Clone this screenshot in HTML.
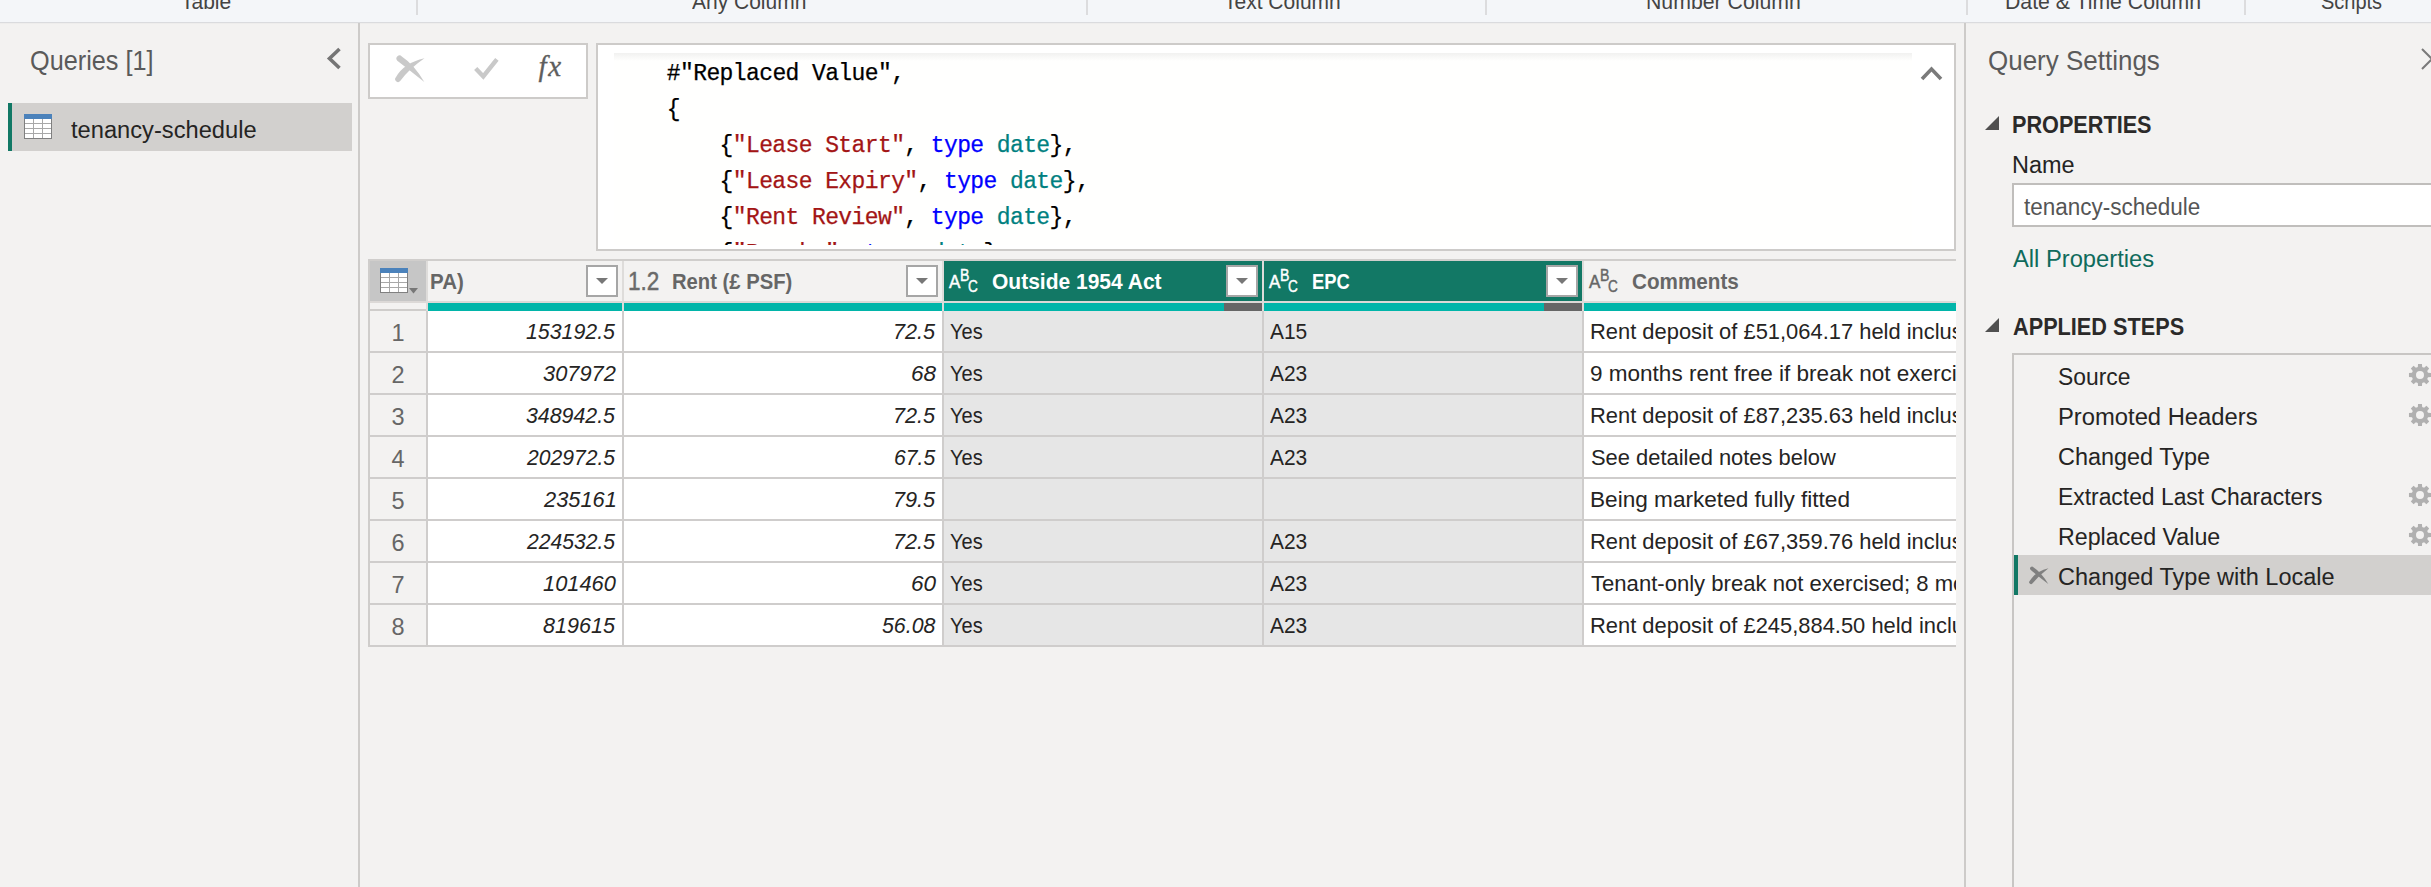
<!DOCTYPE html>
<html lang="en"><head><meta charset="utf-8"><title>Power Query Editor</title>
<style>
*{box-sizing:border-box}
html,body{margin:0;padding:0}
html{width:2431px;height:887px;overflow:hidden}
body{width:2431px;height:887px;overflow:hidden;background:#f3f2f1;position:relative;font-family:"Liberation Sans",sans-serif}
.t{position:absolute;white-space:pre;line-height:1;transform-origin:0 0}
.abs{position:absolute}
svg{position:absolute;overflow:visible}
#ribbon{left:0;top:0;width:2431px;height:22px;background:#f4f6f9;overflow:hidden}
#ribline{left:0;top:22px;width:2431px;height:2px;background:linear-gradient(#dadbde 50%,#eeedec 50%)}
.rsep{top:0;width:2px;height:15px;background:#dcdcde}
#lborder{left:358px;top:23px;width:2px;height:864px;background:#cdcbc9}
#rborder{left:1964px;top:23px;width:2px;height:864px;background:#cdcbc9}
#qitem{left:8px;top:103px;width:344px;height:48px;background:#d2d0ce}
#qitem i{position:absolute;left:0;top:0;width:4px;height:48px;background:#117865}
#fxbox{left:368px;top:43px;width:220px;height:56px;background:#fff;border:2px solid #cdcbc9}
#fbox{left:596px;top:43px;width:1360px;height:208px;background:#fff;border:2px solid #cdcbc9;overflow:hidden}
#code{left:16px;top:8px;width:1298px;height:192px;background:linear-gradient(#f1f1f0,#fffffe 8px);overflow:hidden}
.cl{position:absolute;left:0;-webkit-text-stroke:0.25px currentColor;white-space:pre;line-height:1;font-family:"Liberation Mono",monospace;color:#000;transform-origin:0 0}
.s{color:#a31515}.k{color:#0000ff}.ty{color:#008080}.q{color:#000}
#gridclip{left:0;top:0;width:1956px;height:887px;overflow:hidden}
.dd{width:32px;height:32px;background:#fff;border:2px solid #a6a6a6}
.dd i{position:absolute;left:8px;top:11px;width:0;height:0;border-left:6px solid transparent;border-right:6px solid transparent;border-top:6px solid #777}
#nameinput{left:2012px;top:183px;width:419px;height:44px;background:#fff;border:2px solid #c0bebc;border-right:0}
#stepsbox{left:2012px;top:353px;width:419px;height:534px;border:2px solid #c8c6c4;border-right:0;border-bottom:0;overflow:hidden}
#selstep{left:0;top:200px;width:417px;height:40px;background:#d2d0ce}
#selstep i{position:absolute;left:0;top:0;width:4px;height:40px;background:#117865}
.abc{-webkit-text-stroke:0.45px currentColor}
#app{left:0;top:0;width:2431px;height:887px;overflow:hidden}
</style></head>
<body>
<div id="app" class="abs">
<div id="ribbon" class="abs"><span class="t" style="top:-10.52px;font:400 22px 'Liberation Sans',sans-serif;color:#444;left:181.20px;transform:scaleX(0.9550)">Table</span>
<span class="t" style="top:-10.52px;font:400 22px 'Liberation Sans',sans-serif;color:#444;left:691.50px;transform:scaleX(0.9545)">Any Column</span>
<span class="t" style="top:-10.52px;font:400 22px 'Liberation Sans',sans-serif;color:#444;left:1224.01px;transform:scaleX(0.9550)">Text Column</span>
<span class="t" style="top:-10.52px;font:400 22px 'Liberation Sans',sans-serif;color:#444;left:1645.83px;transform:scaleX(0.9669)">Number Column</span>
<span class="t" style="top:-10.52px;font:400 22px 'Liberation Sans',sans-serif;color:#444;left:2005.03px;transform:scaleX(0.9661)">Date &amp; Time Column</span>
<span class="t" style="top:-10.52px;font:400 22px 'Liberation Sans',sans-serif;color:#444;left:2321.09px;transform:scaleX(0.9089)">Scripts</span></div>
<div class="abs rsep" style="left:416px"></div>
<div class="abs rsep" style="left:1085.5px"></div>
<div class="abs rsep" style="left:1484.5px"></div>
<div class="abs rsep" style="left:1966px"></div>
<div class="abs rsep" style="left:2244px"></div>
<div id="ribline" class="abs"></div>
<div id="lborder" class="abs"></div><div id="rborder" class="abs"></div>
<div id="qitem" class="abs"><i></i></div>
<svg style="left:326px;top:47px" width="16" height="23" viewBox="0 0 16 23"><path d="M13.5 2 L3.5 11.5 L13.5 21" fill="none" stroke="#757575" stroke-width="3.6"/></svg>
<svg style="left:24px;top:114px" width="28" height="25" viewBox="0 0 28 25"><rect x="0.5" y="0.5" width="27" height="24" fill="#fff" stroke="#808080"/><rect x="0" y="0" width="28" height="5" fill="#4b82bb"/><path d="M1 9.5H27M1 14.5H27M1 19.5H27M9.5 5V24M18.5 5V24" stroke="#a8a8a8" stroke-width="1" fill="none"/></svg>

<div id="fxbox" class="abs"><svg style="left:25px;top:10px" width="31" height="29" viewBox="0 0 31 29"><path d="M29.3 27 Q19 9.5 6.8 1.5 A2.8 2.8 0 0 0 2.3 5.7 Q12.5 13.5 29.3 27 Z M29.5 3.3 Q9 8 0.9 22.2 A2.8 2.8 0 0 0 5.2 26 Q14.5 13.5 29.5 3.3 Z" fill="#c9c9c9"/></svg>
<svg style="left:104px;top:13px" width="26" height="23" viewBox="0 0 26 23"><path d="M1.7 10.4 L9.3 18.4 L22.9 1.4" fill="none" stroke="#c9c9c9" stroke-width="4.4"/></svg>
<span class="t" style="left:168.5px;top:4.6px;font:italic 400 29px 'Liberation Serif',serif;color:#5e5e5e;letter-spacing:1.6px;-webkit-text-stroke:0.3px #5e5e5e">fx</span>
</div>
<div id="fbox" class="abs"><div id="code" class="abs"><div class="cl" style="top:9.67px;font-size:23.0px;letter-spacing:-0.605px">    #<span class="q">"Replaced Value"</span>,</div><div class="cl" style="top:45.67px;font-size:23.0px;letter-spacing:-0.605px">    {</div><div class="cl" style="top:81.67px;font-size:23.0px;letter-spacing:-0.605px">        {<span class="s">"Lease Start"</span>, <span class="k">type</span> <span class="ty">date</span>},</div><div class="cl" style="top:117.67px;font-size:23.0px;letter-spacing:-0.605px">        {<span class="s">"Lease Expiry"</span>, <span class="k">type</span> <span class="ty">date</span>},</div><div class="cl" style="top:153.67px;font-size:23.0px;letter-spacing:-0.605px">        {<span class="s">"Rent Review"</span>, <span class="k">type</span> <span class="ty">date</span>},</div><div class="cl" style="top:189.67px;font-size:23.0px;letter-spacing:-0.605px">        {<span class="s">"Breaks"</span>, <span class="k">type</span> <span class="ty">date</span>},</div></div><svg style="left:1322px;top:19.5px" width="23" height="16" viewBox="0 0 23 16"><path d="M2 14 L11.5 4 L21 14" fill="none" stroke="#7a7a7a" stroke-width="3.6"/></svg>
</div>
<div id="gridclip" class="abs"><div class="abs" style="left:368px;top:259px;width:1588px;height:2px;background:#d0cecc;"></div>
<div class="abs" style="left:368px;top:259px;width:2px;height:388px;background:#cfcdcb;"></div>
<div class="abs" style="left:370px;top:261px;width:56px;height:40px;background:#c6c6c6;"></div>
<div class="abs" style="left:944px;top:261px;width:318px;height:40px;background:#127865;"></div>
<div class="abs" style="left:1264px;top:261px;width:318px;height:40px;background:#127865;"></div>
<div class="abs" style="left:370px;top:301px;width:1586px;height:2px;background:#dcd9d7;"></div>
<div class="abs" style="left:370px;top:309px;width:56px;height:2px;background:#cfcdcb;"></div>
<div class="abs" style="left:428px;top:303px;width:194px;height:8px;background:#01b5a9;"></div>
<div class="abs" style="left:624px;top:303px;width:318px;height:8px;background:#01b5a9;"></div>
<div class="abs" style="left:944px;top:303px;width:280px;height:8px;background:#01b5a9;"></div>
<div class="abs" style="left:1264px;top:303px;width:280px;height:8px;background:#01b5a9;"></div>
<div class="abs" style="left:1584px;top:303px;width:372px;height:8px;background:#01b5a9;"></div>
<div class="abs" style="left:1224px;top:303px;width:38px;height:8px;background:#666;"></div>
<div class="abs" style="left:1544px;top:303px;width:38px;height:8px;background:#666;"></div>
<div class="abs" style="left:428px;top:311px;width:194px;height:40px;background:#fff;"></div>
<div class="abs" style="left:624px;top:311px;width:318px;height:40px;background:#fff;"></div>
<div class="abs" style="left:1584px;top:311px;width:372px;height:40px;background:#fff;"></div>
<div class="abs" style="left:944px;top:311px;width:318px;height:40px;background:#e6e6e6;"></div>
<div class="abs" style="left:1264px;top:311px;width:318px;height:40px;background:#e6e6e6;"></div>
<div class="abs" style="left:370px;top:351px;width:1586px;height:2px;background:#cfcdcc;"></div>
<div class="abs" style="left:428px;top:353px;width:194px;height:40px;background:#fff;"></div>
<div class="abs" style="left:624px;top:353px;width:318px;height:40px;background:#fff;"></div>
<div class="abs" style="left:1584px;top:353px;width:372px;height:40px;background:#fff;"></div>
<div class="abs" style="left:944px;top:353px;width:318px;height:40px;background:#e6e6e6;"></div>
<div class="abs" style="left:1264px;top:353px;width:318px;height:40px;background:#e6e6e6;"></div>
<div class="abs" style="left:370px;top:393px;width:1586px;height:2px;background:#cfcdcc;"></div>
<div class="abs" style="left:428px;top:395px;width:194px;height:40px;background:#fff;"></div>
<div class="abs" style="left:624px;top:395px;width:318px;height:40px;background:#fff;"></div>
<div class="abs" style="left:1584px;top:395px;width:372px;height:40px;background:#fff;"></div>
<div class="abs" style="left:944px;top:395px;width:318px;height:40px;background:#e6e6e6;"></div>
<div class="abs" style="left:1264px;top:395px;width:318px;height:40px;background:#e6e6e6;"></div>
<div class="abs" style="left:370px;top:435px;width:1586px;height:2px;background:#cfcdcc;"></div>
<div class="abs" style="left:428px;top:437px;width:194px;height:40px;background:#fff;"></div>
<div class="abs" style="left:624px;top:437px;width:318px;height:40px;background:#fff;"></div>
<div class="abs" style="left:1584px;top:437px;width:372px;height:40px;background:#fff;"></div>
<div class="abs" style="left:944px;top:437px;width:318px;height:40px;background:#e6e6e6;"></div>
<div class="abs" style="left:1264px;top:437px;width:318px;height:40px;background:#e6e6e6;"></div>
<div class="abs" style="left:370px;top:477px;width:1586px;height:2px;background:#cfcdcc;"></div>
<div class="abs" style="left:428px;top:479px;width:194px;height:40px;background:#fff;"></div>
<div class="abs" style="left:624px;top:479px;width:318px;height:40px;background:#fff;"></div>
<div class="abs" style="left:1584px;top:479px;width:372px;height:40px;background:#fff;"></div>
<div class="abs" style="left:944px;top:479px;width:318px;height:40px;background:#e6e6e6;"></div>
<div class="abs" style="left:1264px;top:479px;width:318px;height:40px;background:#e6e6e6;"></div>
<div class="abs" style="left:370px;top:519px;width:1586px;height:2px;background:#cfcdcc;"></div>
<div class="abs" style="left:428px;top:521px;width:194px;height:40px;background:#fff;"></div>
<div class="abs" style="left:624px;top:521px;width:318px;height:40px;background:#fff;"></div>
<div class="abs" style="left:1584px;top:521px;width:372px;height:40px;background:#fff;"></div>
<div class="abs" style="left:944px;top:521px;width:318px;height:40px;background:#e6e6e6;"></div>
<div class="abs" style="left:1264px;top:521px;width:318px;height:40px;background:#e6e6e6;"></div>
<div class="abs" style="left:370px;top:561px;width:1586px;height:2px;background:#cfcdcc;"></div>
<div class="abs" style="left:428px;top:563px;width:194px;height:40px;background:#fff;"></div>
<div class="abs" style="left:624px;top:563px;width:318px;height:40px;background:#fff;"></div>
<div class="abs" style="left:1584px;top:563px;width:372px;height:40px;background:#fff;"></div>
<div class="abs" style="left:944px;top:563px;width:318px;height:40px;background:#e6e6e6;"></div>
<div class="abs" style="left:1264px;top:563px;width:318px;height:40px;background:#e6e6e6;"></div>
<div class="abs" style="left:370px;top:603px;width:1586px;height:2px;background:#cfcdcc;"></div>
<div class="abs" style="left:428px;top:605px;width:194px;height:40px;background:#fff;"></div>
<div class="abs" style="left:624px;top:605px;width:318px;height:40px;background:#fff;"></div>
<div class="abs" style="left:1584px;top:605px;width:372px;height:40px;background:#fff;"></div>
<div class="abs" style="left:944px;top:605px;width:318px;height:40px;background:#e6e6e6;"></div>
<div class="abs" style="left:1264px;top:605px;width:318px;height:40px;background:#e6e6e6;"></div>
<div class="abs" style="left:370px;top:645px;width:1586px;height:2px;background:#cfcdcc;"></div>
<div class="abs" style="left:426px;top:261px;width:2px;height:50px;background:#dedcda;"></div>
<div class="abs" style="left:426px;top:311px;width:2px;height:336px;background:#cfcdcc;"></div>
<div class="abs" style="left:622px;top:261px;width:2px;height:50px;background:#dedcda;"></div>
<div class="abs" style="left:622px;top:311px;width:2px;height:336px;background:#cfcdcc;"></div>
<div class="abs" style="left:942px;top:261px;width:2px;height:50px;background:#dedcda;"></div>
<div class="abs" style="left:942px;top:311px;width:2px;height:336px;background:#cfcdcc;"></div>
<div class="abs" style="left:1262px;top:261px;width:2px;height:50px;background:#dedcda;"></div>
<div class="abs" style="left:1262px;top:311px;width:2px;height:336px;background:#cfcdcc;"></div>
<div class="abs" style="left:1582px;top:261px;width:2px;height:50px;background:#dedcda;"></div>
<div class="abs" style="left:1582px;top:311px;width:2px;height:336px;background:#cfcdcc;"></div>
<div class="abs dd" style="left:586px;top:265px"><i></i></div>
<div class="abs dd" style="left:906px;top:265px"><i></i></div>
<div class="abs dd" style="left:1226px;top:265px"><i></i></div>
<div class="abs dd" style="left:1546px;top:265px"><i></i></div>
<svg style="left:380px;top:268px" width="40" height="26" viewBox="0 0 40 26"><rect x="0.5" y="0.5" width="27" height="24" fill="#fff" stroke="#808080"/><rect x="0" y="0" width="28" height="5" fill="#4b82bb"/><path d="M1 9.5H27M1 14.5H27M1 19.5H27M9.5 5V24M18.5 5V24" stroke="#a8a8a8" stroke-width="1" fill="none"/><path d="M29 20 H38 L33.5 25.5 Z" fill="#777"/></svg>

<span class="t" style="top:269.48px;font:700 22px 'Liberation Sans',sans-serif;color:#666;left:429.77px;transform:scaleX(0.9305)">PA)</span>
<span class="t abc" style="top:266.27px;font:400 26.5px 'Liberation Sans',sans-serif;color:#6a6a6a;left:627.60px;transform:scaleX(0.8504)">1.2</span>
<span class="t" style="top:269.48px;font:700 22px 'Liberation Sans',sans-serif;color:#666;left:671.78px;transform:scaleX(0.9192)">Rent (£ PSF)</span>
<span class="t" style="top:269.48px;font:700 22px 'Liberation Sans',sans-serif;color:#fff;left:992.30px;transform:scaleX(0.9543)">Outside 1954 Act</span>
<span class="t" style="top:269.48px;font:700 22px 'Liberation Sans',sans-serif;color:#fff;left:1311.77px;transform:scaleX(0.8343)">EPC</span>
<span class="t" style="top:269.48px;font:700 22px 'Liberation Sans',sans-serif;color:#666;left:1632.40px;transform:scaleX(0.9396)">Comments</span>
<span class="t abc" style="top:272.19px;font:400 17.5px 'Liberation Sans',sans-serif;color:#fff;left:949.30px;transform:scaleX(0.9750)">A</span>
<span class="t abc" style="top:265.61px;font:400 17px 'Liberation Sans',sans-serif;color:#fff;left:960.17px;transform:scaleX(0.8300)">B</span>
<span class="t abc" style="top:276.88px;font:400 16.8px 'Liberation Sans',sans-serif;color:#fff;left:968.40px;transform:scaleX(0.8083)">C</span>
<span class="t abc" style="top:272.19px;font:400 17.5px 'Liberation Sans',sans-serif;color:#fff;left:1269.20px;transform:scaleX(0.9750)">A</span>
<span class="t abc" style="top:265.61px;font:400 17px 'Liberation Sans',sans-serif;color:#fff;left:1280.07px;transform:scaleX(0.8300)">B</span>
<span class="t abc" style="top:276.88px;font:400 16.8px 'Liberation Sans',sans-serif;color:#fff;left:1288.30px;transform:scaleX(0.8083)">C</span>
<span class="t abc" style="top:272.19px;font:400 17.5px 'Liberation Sans',sans-serif;color:#666;left:1589.30px;transform:scaleX(0.9750)">A</span>
<span class="t abc" style="top:265.61px;font:400 17px 'Liberation Sans',sans-serif;color:#666;left:1600.17px;transform:scaleX(0.8300)">B</span>
<span class="t abc" style="top:276.88px;font:400 16.8px 'Liberation Sans',sans-serif;color:#666;left:1608.40px;transform:scaleX(0.8083)">C</span>
<span class="t" style="top:319.51px;font:400 23.5px 'Liberation Sans',sans-serif;color:#666;left:391.47px;transform:scaleX(1.0000)">1</span>
<span class="t" style="top:319.90px;font:italic 400 21.5px 'Liberation Sans',sans-serif;color:#252423;left:525.70px;transform:scaleX(0.9921)">153192.5</span>
<span class="t" style="top:319.90px;font:italic 400 21.5px 'Liberation Sans',sans-serif;color:#252423;left:892.58px;transform:scaleX(1.0076)">72.5</span>
<span class="t" style="top:319.90px;font:400 21.5px 'Liberation Sans',sans-serif;color:#252423;left:950.00px;transform:scaleX(0.9323)">Yes</span>
<span class="t" style="top:319.90px;font:400 21.5px 'Liberation Sans',sans-serif;color:#252423;left:1270.00px;transform:scaleX(0.9740)">A15</span>
<span class="t" style="top:319.90px;font:400 21.5px 'Liberation Sans',sans-serif;color:#252423;left:1589.98px;transform:scaleX(1.0190)">Rent deposit of £51,064.17 held inclusive of VAT</span>
<span class="t" style="top:361.51px;font:400 23.5px 'Liberation Sans',sans-serif;color:#666;left:391.47px;transform:scaleX(1.0000)">2</span>
<span class="t" style="top:361.90px;font:italic 400 21.5px 'Liberation Sans',sans-serif;color:#252423;left:542.80px;transform:scaleX(1.0155)">307972</span>
<span class="t" style="top:361.90px;font:italic 400 21.5px 'Liberation Sans',sans-serif;color:#252423;left:910.65px;transform:scaleX(1.0498)">68</span>
<span class="t" style="top:361.90px;font:400 21.5px 'Liberation Sans',sans-serif;color:#252423;left:950.00px;transform:scaleX(0.9323)">Yes</span>
<span class="t" style="top:361.90px;font:400 21.5px 'Liberation Sans',sans-serif;color:#252423;left:1270.00px;transform:scaleX(0.9740)">A23</span>
<span class="t" style="top:361.90px;font:400 21.5px 'Liberation Sans',sans-serif;color:#252423;left:1589.95px;transform:scaleX(1.0477)">9 months rent free if break not exercised</span>
<span class="t" style="top:403.51px;font:400 23.5px 'Liberation Sans',sans-serif;color:#666;left:391.47px;transform:scaleX(1.0000)">3</span>
<span class="t" style="top:403.90px;font:italic 400 21.5px 'Liberation Sans',sans-serif;color:#252423;left:525.70px;transform:scaleX(0.9921)">348942.5</span>
<span class="t" style="top:403.90px;font:italic 400 21.5px 'Liberation Sans',sans-serif;color:#252423;left:892.58px;transform:scaleX(1.0076)">72.5</span>
<span class="t" style="top:403.90px;font:400 21.5px 'Liberation Sans',sans-serif;color:#252423;left:950.00px;transform:scaleX(0.9323)">Yes</span>
<span class="t" style="top:403.90px;font:400 21.5px 'Liberation Sans',sans-serif;color:#252423;left:1270.00px;transform:scaleX(0.9740)">A23</span>
<span class="t" style="top:403.90px;font:400 21.5px 'Liberation Sans',sans-serif;color:#252423;left:1589.98px;transform:scaleX(1.0190)">Rent deposit of £87,235.63 held inclusive of VAT</span>
<span class="t" style="top:445.51px;font:400 23.5px 'Liberation Sans',sans-serif;color:#666;left:391.47px;transform:scaleX(1.0000)">4</span>
<span class="t" style="top:445.90px;font:italic 400 21.5px 'Liberation Sans',sans-serif;color:#252423;left:526.68px;transform:scaleX(0.9813)">202972.5</span>
<span class="t" style="top:445.90px;font:italic 400 21.5px 'Liberation Sans',sans-serif;color:#252423;left:893.62px;transform:scaleX(0.9836)">67.5</span>
<span class="t" style="top:445.90px;font:400 21.5px 'Liberation Sans',sans-serif;color:#252423;left:950.00px;transform:scaleX(0.9323)">Yes</span>
<span class="t" style="top:445.90px;font:400 21.5px 'Liberation Sans',sans-serif;color:#252423;left:1270.00px;transform:scaleX(0.9740)">A23</span>
<span class="t" style="top:445.90px;font:400 21.5px 'Liberation Sans',sans-serif;color:#252423;left:1591.00px;transform:scaleX(1.0190)">See detailed notes below</span>
<span class="t" style="top:487.51px;font:400 23.5px 'Liberation Sans',sans-serif;color:#666;left:391.47px;transform:scaleX(1.0000)">5</span>
<span class="t" style="top:487.90px;font:italic 400 21.5px 'Liberation Sans',sans-serif;color:#252423;left:543.82px;transform:scaleX(1.0155)">235161</span>
<span class="t" style="top:487.90px;font:italic 400 21.5px 'Liberation Sans',sans-serif;color:#252423;left:892.58px;transform:scaleX(1.0076)">79.5</span>
<span class="t" style="top:487.90px;font:400 21.5px 'Liberation Sans',sans-serif;color:#252423;left:1589.95px;transform:scaleX(1.0510)">Being marketed fully fitted</span>
<span class="t" style="top:529.51px;font:400 23.5px 'Liberation Sans',sans-serif;color:#666;left:391.47px;transform:scaleX(1.0000)">6</span>
<span class="t" style="top:529.90px;font:italic 400 21.5px 'Liberation Sans',sans-serif;color:#252423;left:526.68px;transform:scaleX(0.9813)">224532.5</span>
<span class="t" style="top:529.90px;font:italic 400 21.5px 'Liberation Sans',sans-serif;color:#252423;left:892.58px;transform:scaleX(1.0076)">72.5</span>
<span class="t" style="top:529.90px;font:400 21.5px 'Liberation Sans',sans-serif;color:#252423;left:950.00px;transform:scaleX(0.9323)">Yes</span>
<span class="t" style="top:529.90px;font:400 21.5px 'Liberation Sans',sans-serif;color:#252423;left:1270.00px;transform:scaleX(0.9740)">A23</span>
<span class="t" style="top:529.90px;font:400 21.5px 'Liberation Sans',sans-serif;color:#252423;left:1589.98px;transform:scaleX(1.0190)">Rent deposit of £67,359.76 held inclusive of VAT</span>
<span class="t" style="top:571.51px;font:400 23.5px 'Liberation Sans',sans-serif;color:#666;left:391.47px;transform:scaleX(1.0000)">7</span>
<span class="t" style="top:571.90px;font:italic 400 21.5px 'Liberation Sans',sans-serif;color:#252423;left:542.80px;transform:scaleX(1.0155)">101460</span>
<span class="t" style="top:571.90px;font:italic 400 21.5px 'Liberation Sans',sans-serif;color:#252423;left:910.65px;transform:scaleX(1.0498)">60</span>
<span class="t" style="top:571.90px;font:400 21.5px 'Liberation Sans',sans-serif;color:#252423;left:950.00px;transform:scaleX(0.9323)">Yes</span>
<span class="t" style="top:571.90px;font:400 21.5px 'Liberation Sans',sans-serif;color:#252423;left:1270.00px;transform:scaleX(0.9740)">A23</span>
<span class="t" style="top:571.90px;font:400 21.5px 'Liberation Sans',sans-serif;color:#252423;left:1591.00px;transform:scaleX(1.0270)">Tenant-only break not exercised; 8 months rent free</span>
<span class="t" style="top:613.51px;font:400 23.5px 'Liberation Sans',sans-serif;color:#666;left:391.47px;transform:scaleX(1.0000)">8</span>
<span class="t" style="top:613.90px;font:italic 400 21.5px 'Liberation Sans',sans-serif;color:#252423;left:542.80px;transform:scaleX(1.0016)">819615</span>
<span class="t" style="top:613.90px;font:italic 400 21.5px 'Liberation Sans',sans-serif;color:#252423;left:882.40px;transform:scaleX(0.9917)">56.08</span>
<span class="t" style="top:613.90px;font:400 21.5px 'Liberation Sans',sans-serif;color:#252423;left:950.00px;transform:scaleX(0.9323)">Yes</span>
<span class="t" style="top:613.90px;font:400 21.5px 'Liberation Sans',sans-serif;color:#252423;left:1270.00px;transform:scaleX(0.9740)">A23</span>
<span class="t" style="top:613.90px;font:400 21.5px 'Liberation Sans',sans-serif;color:#252423;left:1589.98px;transform:scaleX(1.0190)">Rent deposit of £245,884.50 held inclusive of VAT</span></div>
<div id="nameinput" class="abs"></div><div id="stepsbox" class="abs"><div id="selstep" class="abs"><i></i></div></div>
<svg style="left:1985px;top:116px" width="14" height="14" viewBox="0 0 14 14"><path d="M14 0 V14 H0 Z" fill="#505050"/></svg>
<svg style="left:1985px;top:318px" width="14" height="14" viewBox="0 0 14 14"><path d="M14 0 V14 H0 Z" fill="#505050"/></svg>
<svg style="left:2029px;top:566px" width="20" height="19" viewBox="0 0 20 19"><path d="M19.3 18 Q12.5 6.5 4.4 1.2 A1.8 1.8 0 0 0 1.6 3.8 Q8.5 10 19.3 18 Z M19.5 2.3 Q6.5 5.5 0.6 15 A1.8 1.8 0 0 0 3.4 17.4 Q10 9.5 19.5 2.3 Z" fill="#808080"/></svg>
<svg style="left:2421px;top:48px" width="22" height="22" viewBox="0 0 22 22"><path d="M1 1 L21 21 M21 1 L1 21" fill="none" stroke="#7a7a7a" stroke-width="2"/></svg>
<svg style="left:2408px;top:363px" width="24" height="24" viewBox="0 0 24 24"><path d="M9.81 3.99 L10.07 0.97 L13.93 0.97 L14.19 3.99 L16.11 4.79 L18.44 2.84 L21.16 5.56 L19.21 7.89 L20.01 9.81 L23.03 10.07 L23.03 13.93 L20.01 14.19 L19.21 16.11 L21.16 18.44 L18.44 21.16 L16.11 19.21 L14.19 20.01 L13.93 23.03 L10.07 23.03 L9.81 20.01 L7.89 19.21 L5.56 21.16 L2.84 18.44 L4.79 16.11 L3.99 14.19 L0.97 13.93 L0.97 10.07 L3.99 9.81 L4.79 7.89 L2.84 5.56 L5.56 2.84 L7.89 4.79 Z M8.00 12.00 a4.0 4.0 0 1 0 8.0 0 a4.0 4.0 0 1 0 -8.0 0 Z" fill="#b0b0b0" fill-rule="evenodd"/></svg>
<svg style="left:2408px;top:403px" width="24" height="24" viewBox="0 0 24 24"><path d="M9.81 3.99 L10.07 0.97 L13.93 0.97 L14.19 3.99 L16.11 4.79 L18.44 2.84 L21.16 5.56 L19.21 7.89 L20.01 9.81 L23.03 10.07 L23.03 13.93 L20.01 14.19 L19.21 16.11 L21.16 18.44 L18.44 21.16 L16.11 19.21 L14.19 20.01 L13.93 23.03 L10.07 23.03 L9.81 20.01 L7.89 19.21 L5.56 21.16 L2.84 18.44 L4.79 16.11 L3.99 14.19 L0.97 13.93 L0.97 10.07 L3.99 9.81 L4.79 7.89 L2.84 5.56 L5.56 2.84 L7.89 4.79 Z M8.00 12.00 a4.0 4.0 0 1 0 8.0 0 a4.0 4.0 0 1 0 -8.0 0 Z" fill="#b0b0b0" fill-rule="evenodd"/></svg>
<svg style="left:2408px;top:483px" width="24" height="24" viewBox="0 0 24 24"><path d="M9.81 3.99 L10.07 0.97 L13.93 0.97 L14.19 3.99 L16.11 4.79 L18.44 2.84 L21.16 5.56 L19.21 7.89 L20.01 9.81 L23.03 10.07 L23.03 13.93 L20.01 14.19 L19.21 16.11 L21.16 18.44 L18.44 21.16 L16.11 19.21 L14.19 20.01 L13.93 23.03 L10.07 23.03 L9.81 20.01 L7.89 19.21 L5.56 21.16 L2.84 18.44 L4.79 16.11 L3.99 14.19 L0.97 13.93 L0.97 10.07 L3.99 9.81 L4.79 7.89 L2.84 5.56 L5.56 2.84 L7.89 4.79 Z M8.00 12.00 a4.0 4.0 0 1 0 8.0 0 a4.0 4.0 0 1 0 -8.0 0 Z" fill="#b0b0b0" fill-rule="evenodd"/></svg>
<svg style="left:2408px;top:523px" width="24" height="24" viewBox="0 0 24 24"><path d="M9.81 3.99 L10.07 0.97 L13.93 0.97 L14.19 3.99 L16.11 4.79 L18.44 2.84 L21.16 5.56 L19.21 7.89 L20.01 9.81 L23.03 10.07 L23.03 13.93 L20.01 14.19 L19.21 16.11 L21.16 18.44 L18.44 21.16 L16.11 19.21 L14.19 20.01 L13.93 23.03 L10.07 23.03 L9.81 20.01 L7.89 19.21 L5.56 21.16 L2.84 18.44 L4.79 16.11 L3.99 14.19 L0.97 13.93 L0.97 10.07 L3.99 9.81 L4.79 7.89 L2.84 5.56 L5.56 2.84 L7.89 4.79 Z M8.00 12.00 a4.0 4.0 0 1 0 8.0 0 a4.0 4.0 0 1 0 -8.0 0 Z" fill="#b0b0b0" fill-rule="evenodd"/></svg>

<span class="t" style="top:45.10px;font:400 28px 'Liberation Sans',sans-serif;color:#5a5a5a;left:1988.07px;transform:scaleX(0.9280)">Query Settings</span>
<span class="t" style="top:112.21px;font:700 23.5px 'Liberation Sans',sans-serif;color:#2b2a29;left:2012.38px;transform:scaleX(0.9212)">PROPERTIES</span>
<span class="t" style="top:151.81px;font:400 23.5px 'Liberation Sans',sans-serif;color:#252423;left:2012.30px;transform:scaleX(0.9981)">Name</span>
<span class="t" style="top:193.63px;font:400 23px 'Liberation Sans',sans-serif;color:#555;left:2024.00px;transform:scaleX(0.9772)">tenancy-schedule</span>
<span class="t" style="top:245.91px;font:400 23.5px 'Liberation Sans',sans-serif;color:#0f6b5c;left:2012.70px;transform:scaleX(1.0094)">All Properties</span>
<span class="t" style="top:314.21px;font:700 23.5px 'Liberation Sans',sans-serif;color:#2b2a29;left:2012.50px;transform:scaleX(0.9228)">APPLIED STEPS</span>
<span class="t" style="top:364.21px;font:400 23.5px 'Liberation Sans',sans-serif;color:#252423;left:2057.73px;transform:scaleX(0.9729)">Source</span>
<span class="t" style="top:404.21px;font:400 23.5px 'Liberation Sans',sans-serif;color:#252423;left:2057.69px;transform:scaleX(1.0118)">Promoted Headers</span>
<span class="t" style="top:444.21px;font:400 23.5px 'Liberation Sans',sans-serif;color:#252423;left:2057.70px;transform:scaleX(0.9974)">Changed Type</span>
<span class="t" style="top:484.21px;font:400 23.5px 'Liberation Sans',sans-serif;color:#252423;left:2057.73px;transform:scaleX(0.9729)">Extracted Last Characters</span>
<span class="t" style="top:524.21px;font:400 23.5px 'Liberation Sans',sans-serif;color:#252423;left:2057.71px;transform:scaleX(0.9883)">Replaced Value</span>
<span class="t" style="top:564.21px;font:400 23.5px 'Liberation Sans',sans-serif;color:#252423;left:2057.70px;transform:scaleX(1.0004)">Changed Type with Locale</span>
<span class="t" style="top:45.10px;font:400 28px 'Liberation Sans',sans-serif;color:#5a5a5a;left:30.10px;transform:scaleX(0.9018)">Queries [1]</span>
<span class="t" style="top:116.63px;font:400 23px 'Liberation Sans',sans-serif;color:#252423;left:70.70px;transform:scaleX(1.0296)">tenancy-schedule</span>
</div>
</body></html>
